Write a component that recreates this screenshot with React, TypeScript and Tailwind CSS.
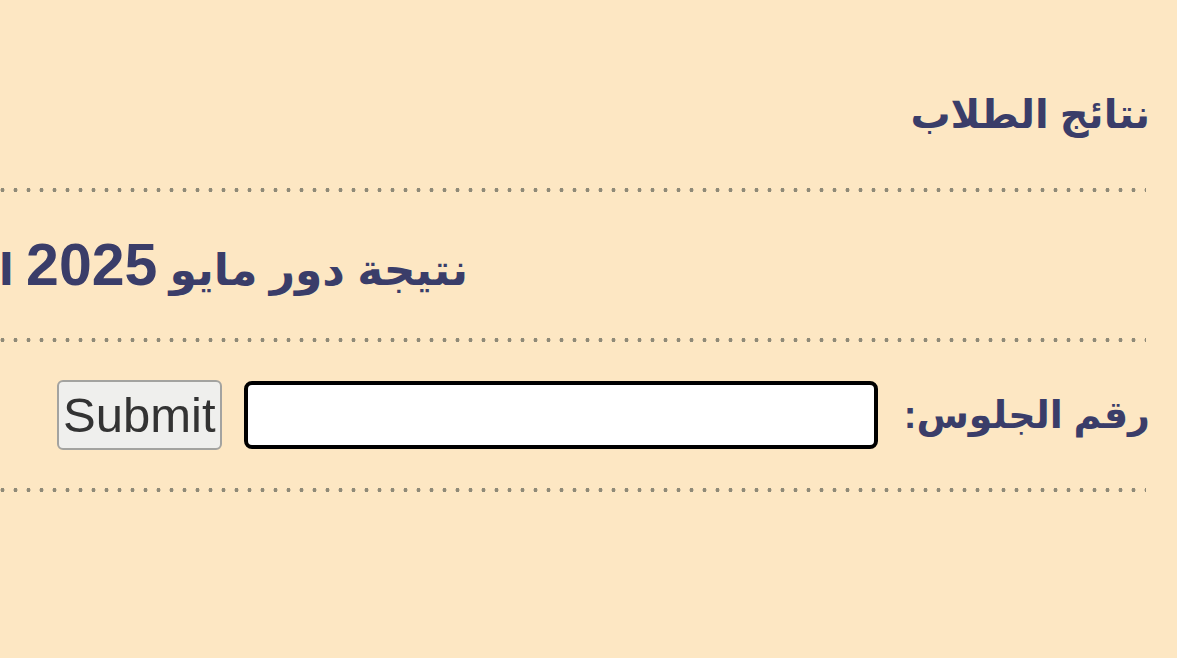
import React from "react";

const dotted =
  "h-[4px] w-full bg-[radial-gradient(circle,#8f8a78_1.8px,transparent_2.2px)] bg-[length:13px_4px] bg-repeat-x";

export default function App() {
  return (
    <div
      dir="rtl"
      className="w-[1177px] h-[658px] overflow-hidden bg-[#fde7c3] text-[#3a3d69]"
      style={{ fontFamily: '"Liberation Sans", Arial, "DejaVu Sans", sans-serif' }}
    >
      <div className="pt-[40px] pr-[27px] w-full">
        <div className="h-[148px] flex items-center">
          <h1 className="text-[40px] font-bold whitespace-nowrap leading-none">نتائج الطلاب</h1>
        </div>
        <div className={dotted + " mr-[4px]"} />
        <div className="h-[146px] flex items-center pr-[682px]">
          <h2 className="font-bold whitespace-nowrap leading-none shrink-0 text-[44px]">
            <span>نتيجة دور مايو </span>
            <span className="text-[59px]">2025</span>
            <span> الشهادة الإعدادية</span>
          </h2>
        </div>
        <div className={dotted + " mr-[4px]"} />
        <div className="h-[146px] flex items-center gap-[26px]">
          <label className="text-[38px] font-bold whitespace-nowrap leading-none">رقم الجلوس:</label>
          <input
            type="text"
            className="w-[634px] h-[68px] bg-white border-[4px] border-black rounded-[8px] outline-none shrink-0"
          />
          <button
            type="button"
            className="mr-[-4px] w-[165px] h-[70px] shrink-0 bg-[#efefed] border-[2px] border-[#a3a3a0] rounded-[6px] text-[49px] text-[#333] leading-none"
            style={{ fontFamily: '"Liberation Sans", Arial, sans-serif' }}
          >
            Submit
          </button>
        </div>
        <div className={dotted + " mr-[4px]"} />
      </div>
    </div>
  );
}
